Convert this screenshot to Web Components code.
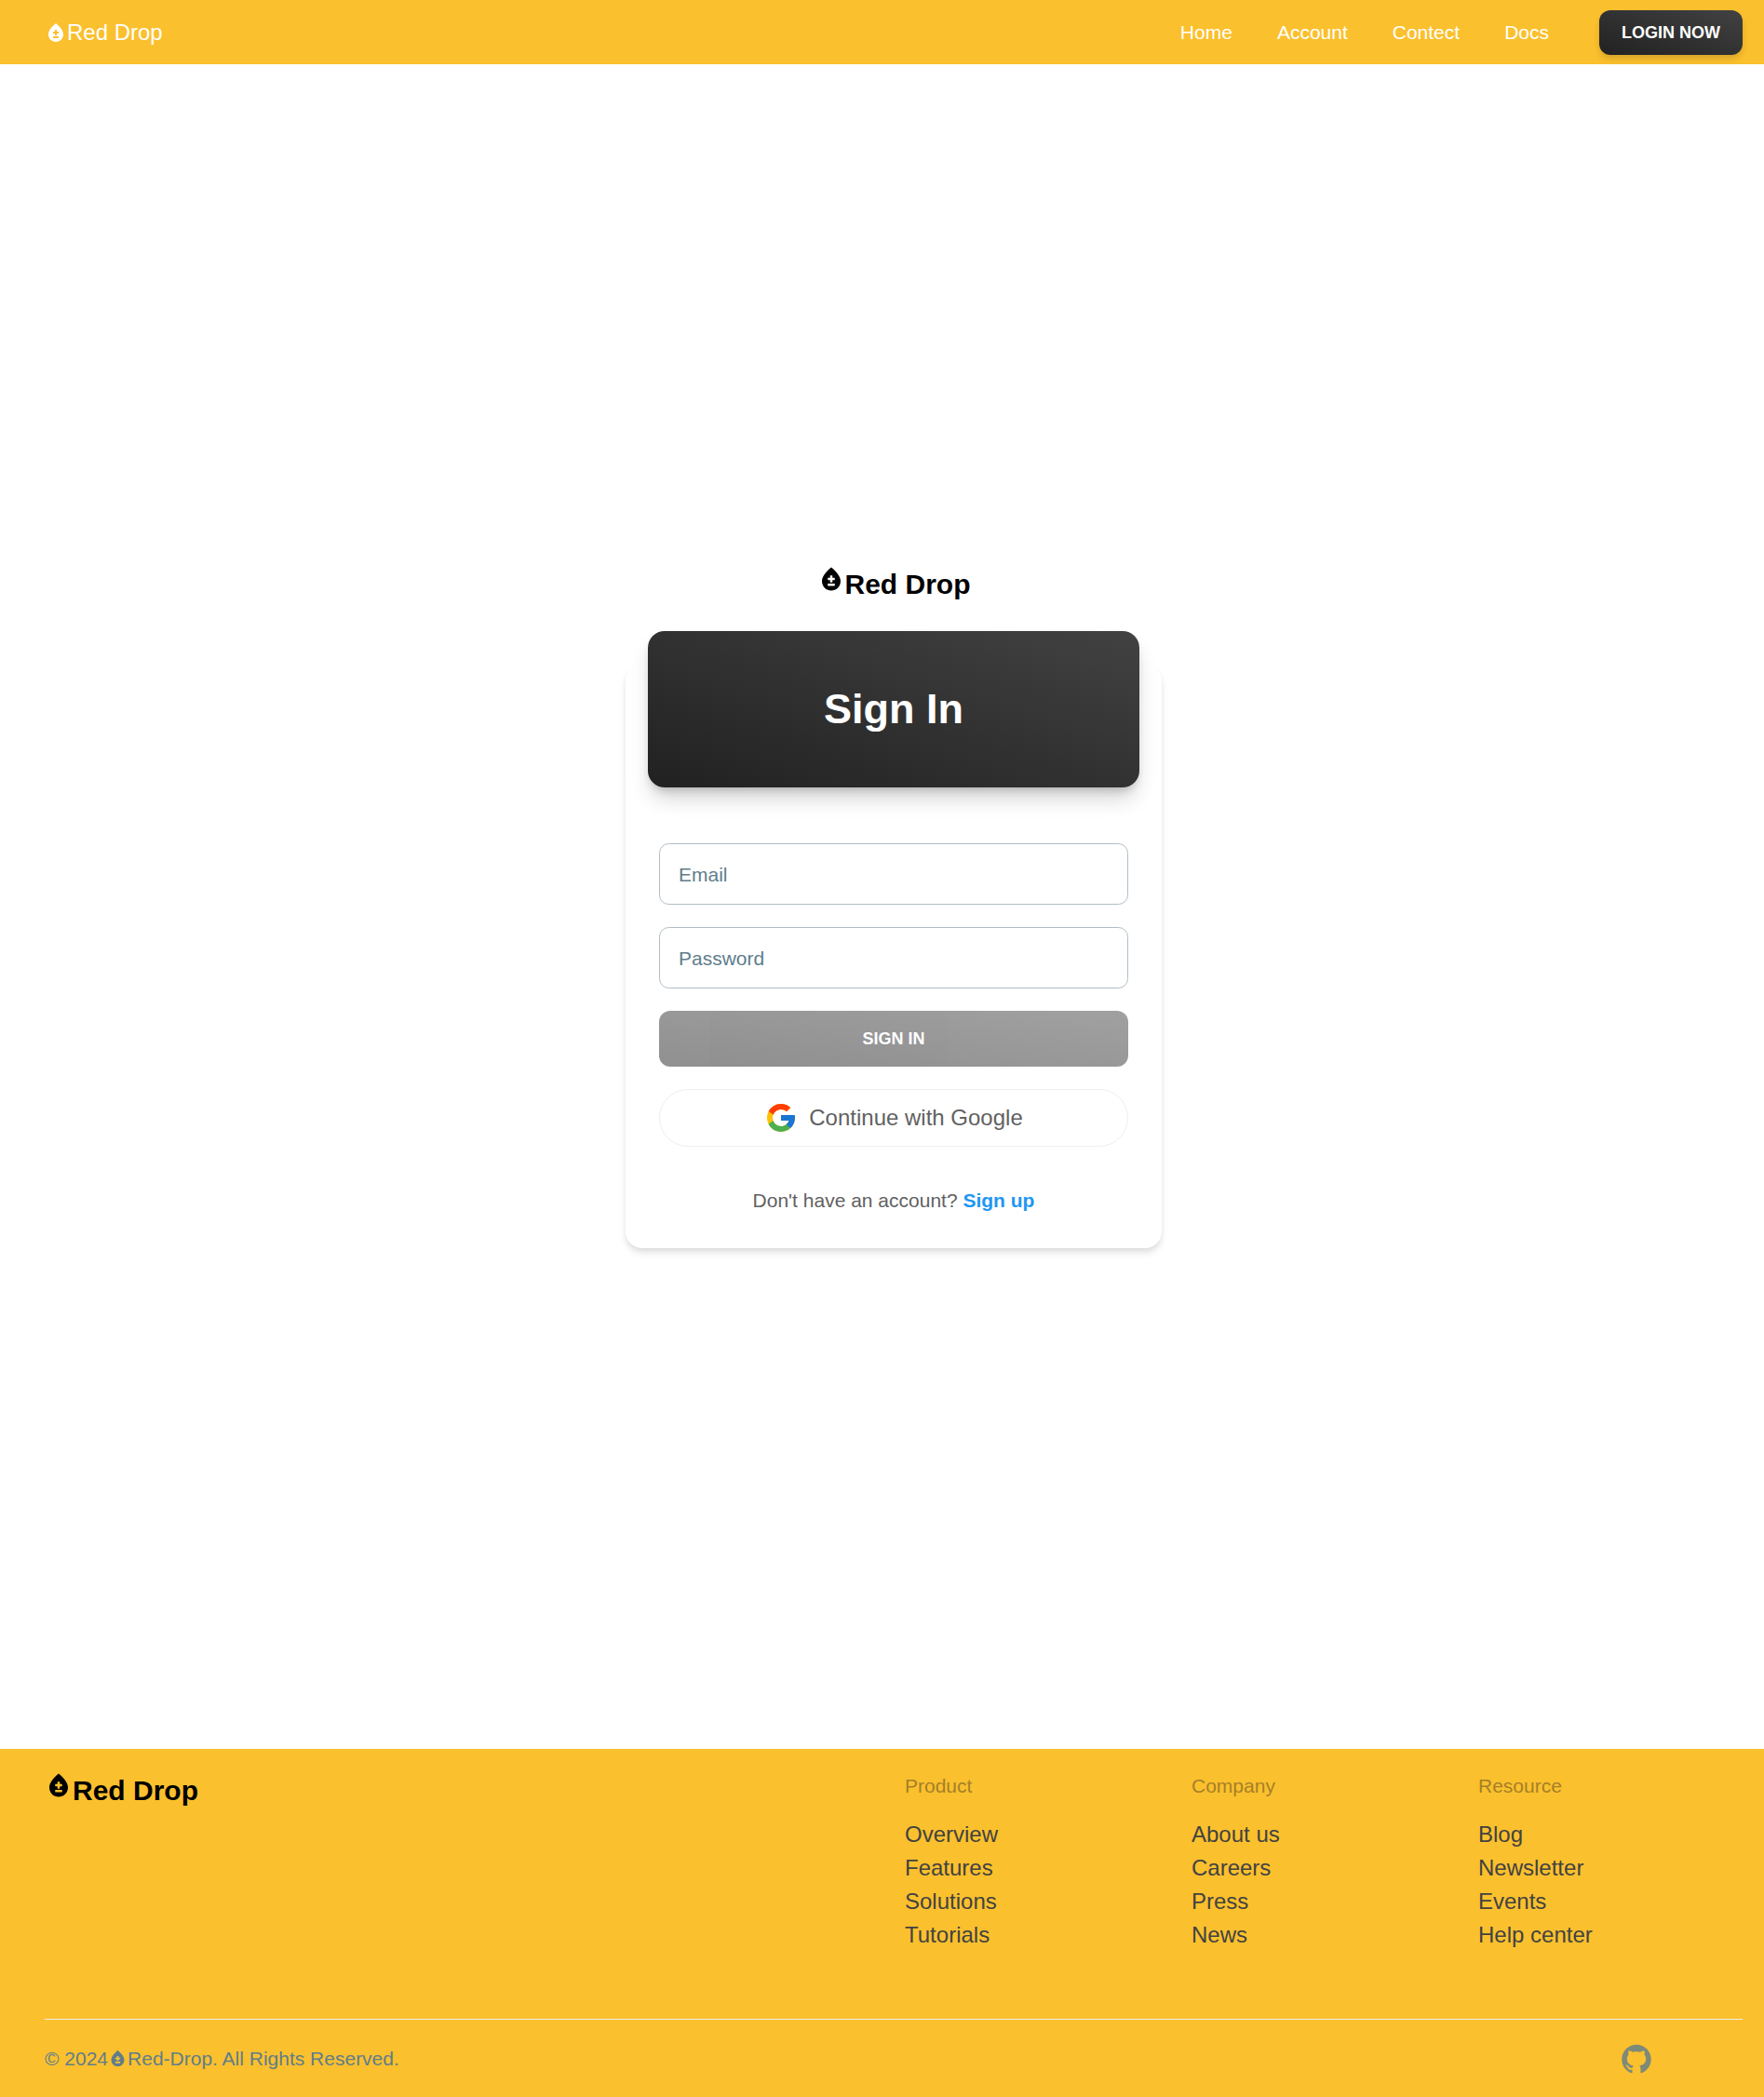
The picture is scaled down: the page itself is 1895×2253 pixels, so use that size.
<!DOCTYPE html>
<html lang="en">
<head>
<meta charset="utf-8">
<title>Red Drop</title>
<style>
html, body { margin: 0; }
body { font-family: "Liberation Sans", Arial, sans-serif; font-size: 24px; line-height: 36px; background: #fff; }
</style>
</head>
<body>
<red-drop-app></red-drop-app>
<script>
const define = (name, html) => {
  const t = document.createElement('template');
  t.innerHTML = html;
  customElements.define(name, class extends HTMLElement {
    constructor() {
      super();
      this.attachShadow({ mode: 'open' }).appendChild(t.content.cloneNode(true));
    }
  });
};

define('drop-icon', `
<style>
:host { display: block; width: 1em; height: 1em; flex: none; }
svg { display: block; width: 100%; height: 100%; fill: currentColor; }
</style>
<svg viewBox="0 0 24 24"><path d="M12 2c-5.33 4.55-8 8.48-8 11.8 0 4.98 3.8 8.2 8 8.2s8-3.22 8-8.2c0-3.32-2.67-7.25-8-11.8zm3 16H9v-2h6v2zm0-5h-2v2h-2v-2H9v-2h2V9h2v2h2v2z"/></svg>`);

define('brand-mark', `
<style>
:host { display: flex; width: max-content; height: 45px; font-size: 30px; line-height: 42px; font-weight: 700; color: #000; }
</style>
<drop-icon></drop-icon><span>Red Drop</span>`);

define('nav-link', `
<style>:host { display: block; padding: 6px; font-size: 21px; line-height: 30px; color: #fff; }</style>
<slot></slot>`);

define('dark-button', `
<style>
:host { display: flex; align-items: center; justify-content: center; box-sizing: border-box;
  border-radius: 12px; background: linear-gradient(to top right, #212121, #424242); color: #fff;
  font-size: 18px; line-height: 24px; font-weight: 700; text-transform: uppercase; white-space: nowrap; }
</style>
<slot></slot>`);

define('site-header', `
<style>
:host { display: flex; align-items: center; justify-content: space-between; box-sizing: border-box;
  height: 69px; padding: 0 23px 0 48px; background: #fbc02d; }
.brand { display: flex; align-items: center; color: #fff; }
nav { display: flex; gap: 36px; margin-right: 48px; }
.right { display: flex; align-items: center; }
dark-button { width: 154px; height: 48px; margin-top: 1px;
  box-shadow: 0 6px 9px -1.5px rgba(33,33,33,.1), 0 3px 6px -1.5px rgba(33,33,33,.1); }
</style>
<div class="brand"><drop-icon></drop-icon><span>Red Drop</span></div>
<div class="right">
  <nav><nav-link>Home</nav-link><nav-link>Account</nav-link><nav-link>Contect</nav-link><nav-link>Docs</nav-link></nav>
  <dark-button>Login Now</dark-button>
</div>`);

define('text-field', `
<style>
:host { display: flex; align-items: center; box-sizing: border-box; height: 66px; padding: 2px 20px 0;
  border: 1px solid #b0bec5; border-radius: 10.5px; font-size: 21px; line-height: 30px; color: #607d8b; }
</style>
<slot></slot>`);

define('google-button', `
<style>
:host { display: flex; align-items: center; justify-content: center; gap: 12px; box-sizing: border-box;
  height: 62px; border: 1px solid #eee; border-radius: 31px; color: #616161; }
svg { display: block; width: 36px; height: 36px; }
</style>
<svg viewBox="0 0 48 48">
<path fill="#FFC107" d="M43.611,20.083H42V20H24v8h11.303c-1.649,4.657-6.08,8-11.303,8c-6.627,0-12-5.373-12-12c0-6.627,5.373-12,12-12c3.059,0,5.842,1.154,7.961,3.039l5.657-5.657C34.046,6.053,29.268,4,24,4C12.955,4,4,12.955,4,24c0,11.045,8.955,20,20,20c11.045,0,20-8.955,20-20C44,22.659,43.862,21.35,43.611,20.083z"/>
<path fill="#FF3D00" d="M6.306,14.691l6.571,4.819C14.655,15.108,18.961,12,24,12c3.059,0,5.842,1.154,7.961,3.039l5.657-5.657C34.046,6.053,29.268,4,24,4C16.318,4,9.656,8.337,6.306,14.691z"/>
<path fill="#4CAF50" d="M24,44c5.166,0,9.86-1.977,13.409-5.192l-6.19-5.238C29.211,35.091,26.715,36,24,36c-5.202,0-9.619-3.317-11.283-7.946l-6.522,5.025C9.505,39.556,16.227,44,24,44z"/>
<path fill="#1976D2" d="M43.611,20.083H42V20H24v8h11.303c-0.792,2.237-2.231,4.166-4.087,5.571c0.001-0.001,0.002-0.001,0.003-0.002l6.19,5.238C36.971,39.205,44,34,44,24C44,22.659,43.862,21.35,43.611,20.083z"/>
</svg>
<span><slot></slot></span>`);

define('sign-in-card', `
<style>
:host { display: flex; flex-direction: column; box-sizing: border-box; width: 576px; height: 627px;
  padding: 0 24px; border-radius: 18px; background: #fff;
  box-shadow: 0 6px 9px -1.5px rgba(0,0,0,.1), 0 3px 6px -1.5px rgba(0,0,0,.06); }
h3 { display: flex; align-items: center; justify-content: center; height: 168px; margin: -36px 0 0; flex: none;
  border-radius: 18px; background: linear-gradient(to top right, #212121, #424242); color: #fff;
  font-size: 45px; line-height: 62px; font-weight: 700;
  box-shadow: 0 15px 22.5px -4.5px rgba(33,33,33,.2), 0 6px 9px -3px rgba(33,33,33,.2); }
.body { display: flex; flex-direction: column; gap: 24px; padding: 60px 12px 0; }
dark-button { height: 60px; opacity: .5; }
p { margin: 18px 0 0; text-align: center; font-size: 21px; line-height: 31px; color: #616161; }
b { color: #2196f3; }
</style>
<h3>Sign In</h3>
<div class="body">
  <text-field>Email</text-field>
  <text-field>Password</text-field>
  <dark-button>Sign In</dark-button>
  <google-button>Continue with Google</google-button>
  <p>Don't have an account? <b>Sign up</b></p>
</div>`);

define('link-column', `
<style>
:host { display: block; color: #424242; }
h4 { margin: 0 0 19px; font-size: 21px; line-height: 31px; font-weight: 400; color: #212121; opacity: .4; }
</style>
<h4><slot name="title"></slot></h4><slot></slot>`);

define('site-footer', `
<style>
:host { display: block; box-sizing: border-box; height: 374px; padding: 24px 23px 0 48px; background: #fbc02d; }
.top { display: grid; grid-template-columns: 900px 900px; gap: 24px; height: 266px; }
.cols { display: grid; grid-template-columns: repeat(3, 1fr); gap: 24px; }
.bottom { display: flex; align-items: center; justify-content: space-between; height: 84px;
  border-top: 1px solid #eceff1; font-size: 21px; line-height: 30px; color: #607d8b; }
.copy { display: flex; align-items: center; }
.copy drop-icon { margin-bottom: 1px; }
.git { display: block; width: 36px; height: 36px; margin-right: 96px; fill: currentColor; opacity: .8; }
</style>
<div class="top">
  <brand-mark></brand-mark>
  <div class="cols">
    <link-column><span slot="title">Product</span><div>Overview</div><div>Features</div><div>Solutions</div><div>Tutorials</div></link-column>
    <link-column><span slot="title">Company</span><div>About us</div><div>Careers</div><div>Press</div><div>News</div></link-column>
    <link-column><span slot="title">Resource</span><div>Blog</div><div>Newsletter</div><div>Events</div><div>Help center</div></link-column>
  </div>
</div>
<div class="bottom">
  <div class="copy"><span>© 2024</span><drop-icon></drop-icon><span>Red-Drop. All Rights Reserved.</span></div>
  <svg class="git" viewBox="0 0 1024 1024"><path d="M511.6 76.3C264.3 76.2 64 276.4 64 523.5 64 718.9 189.3 885 363.8 946c23.5 5.9 19.9-10.8 19.9-22.2v-77.5c-135.7 15.9-141.2-73.9-150.3-88.9C215 726 171.5 718 184.5 703c30.9-15.9 62.4 4 98.9 57.9 26.4 39.1 77.9 32.5 104 26 5.7-23.5 17.9-44.5 34.7-60.8-140.6-25.2-199.2-111-199.2-213 0-49.5 16.3-95 48.3-131.7-20.4-60.5 1.9-112.3 4.9-120 58.1-5.2 118.5 41.6 123.2 45.3 33-8.9 70.7-13.6 112.9-13.6 42.4 0 80.2 4.9 113.5 13.9 11.3-8.6 67.3-48.8 121.3-43.9 2.9 7.7 24.7 58.3 5.5 118 32.4 36.8 48.9 82.7 48.9 132.3 0 102.2-59 188.1-200 212.9a127.5 127.5 0 0 1 38.1 91v112.5c.8 9 0 17.9 15 17.9 177.1-59.7 304.6-227 304.6-424.1 0-247.2-200.4-447.3-447.5-447.3z"/></svg>
</div>`);

define('red-drop-app', `
<style>
:host { display: flex; flex-direction: column; height: 2253px; }
main { flex: 1; display: flex; flex-direction: column; align-items: center; padding: 538px 0 0 25px; }
brand-mark { margin-bottom: 62px; }
</style>
<site-header></site-header>
<main><brand-mark></brand-mark><sign-in-card></sign-in-card></main>
<site-footer></site-footer>`);
</script>
</body>
</html>
